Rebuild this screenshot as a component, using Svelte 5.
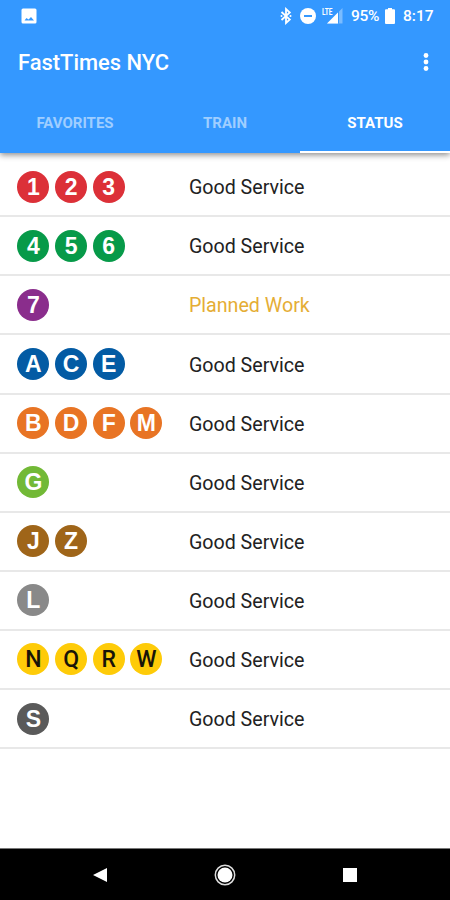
<script>
	const tabs = ['FAVORITES', 'TRAIN', 'STATUS'];
	let active = 'STATUS';

	const lines = [
		{ trains: ['1', '2', '3'], color: '#dc3038', status: 'Good Service' },
		{ trains: ['4', '5', '6'], color: '#079a49', status: 'Good Service' },
		{ trains: ['7'], color: '#8a2d8c', status: 'Planned Work' },
		{ trains: ['A', 'C', 'E'], color: '#035ba4', status: 'Good Service' },
		{ trains: ['B', 'D', 'F', 'M'], color: '#e87424', status: 'Good Service' },
		{ trains: ['G'], color: '#72b936', status: 'Good Service' },
		{ trains: ['J', 'Z'], color: '#9f6519', status: 'Good Service' },
		{ trains: ['L'], color: '#898989', status: 'Good Service' },
		{ trains: ['N', 'Q', 'R', 'W'], color: '#fecb08', dark: true, status: 'Good Service' },
		{ trains: ['S'], color: '#5a5a5a', status: 'Good Service' }
	];
</script>

<div class="app">
	<header>
		<div class="statusbar">
			<svg class="photo" width="16" height="16" viewBox="0 0 16 16">
				<path
					fill="#fff"
					fill-rule="evenodd"
					d="M2 .5h12A1.500 1.500 0 0 1 15.500 2v12a1.500 1.500 0 0 1-1.500 1.500H2A1.500 1.500 0 0 1 .5 14V2A1.500 1.500 0 0 1 2 .5zM3.500 12.500h9.500L10 9 7.500 11.500 5.500 10z"
				/>
			</svg>
			<svg class="bluetooth" width="12" height="18" viewBox="0 0 12 18">
				<path fill="none" stroke="#fff" stroke-width="1.800" d="M1.500 5l8.300 7.500L6 16V2l3.800 3.500L1.500 13" />
				<circle cx="1.500" cy="9" r="1" fill="#fff" />
				<circle cx="10.500" cy="9" r="1" fill="#fff" />
			</svg>
			<svg class="dnd" width="18" height="18" viewBox="0 0 18 18">
				<circle cx="9" cy="9" r="8" fill="#fff" />
				<path stroke="#3498ff" stroke-width="2" d="M5 9h8" />
			</svg>
			<svg class="signal" width="22" height="18" viewBox="0 0 22 18">
				<path fill="#fff" opacity=".35" d="M20.500 1v15.500H5z" />
				<path fill="#fff" d="M16 5.500v11H5z" />
				<path fill="#3498ff" d="M16 1h1v15.500h-1zM0 0h10.500v8.500H0z" />
				<text x="0" y="8" textLength="10.500" lengthAdjust="spacingAndGlyphs">LTE</text>
			</svg>
			<span class="percent">95%</span>
			<svg class="battery" width="10" height="16" viewBox="0 0 10 16">
				<path fill="#fff" d="M3 0h4v1.200h2q1 0 1 1V15q0 1-1 1H1q-1 0-1-1V2.200q0-1 1-1h2z" />
			</svg>
			<span class="clock">8:17</span>
		</div>
		<div class="toolbar">
			<h1>FastTimes NYC</h1>
			<svg width="6" height="20" viewBox="0 0 6 20" fill="#fff">
				<circle cx="3" cy="3.500" r="2.400" />
				<circle cx="3" cy="10" r="2.400" />
				<circle cx="3" cy="16.500" r="2.400" />
			</svg>
		</div>
		<nav class="tabs">
			{#each tabs as tab}
				<button class:active={tab === active} on:click={() => (active = tab)}>{tab}</button>
			{/each}
		</nav>
	</header>

	<main>
		{#each lines as line}
			<div class="row">
				<div class="trains">
					{#each line.trains as train}
						<span class="bullet" class:dark={line.dark} style="background: {line.color}">{train}</span>
					{/each}
				</div>
				<span class="status" class:planned={line.status === 'Planned Work'}>{line.status}</span>
			</div>
		{/each}
	</main>

	<footer>
		<svg width="16" height="16" viewBox="0 0 16 16">
			<path fill="#fff" d="M15 1v14L1 8z" />
		</svg>
		<svg width="22" height="22" viewBox="0 0 22 22">
			<circle cx="11" cy="11" r="9.700" fill="none" stroke="#ddd" stroke-width="1.500" />
			<circle cx="11" cy="11" r="7.500" fill="#fff" />
		</svg>
		<svg width="16" height="16" viewBox="0 0 16 16">
			<path fill="#fff" d="M1 1h14v14H1z" />
		</svg>
	</footer>
</div>

<style>
	:global(body) {
		margin: 0;
	}

	.app {
		display: flex;
		flex-direction: column;
		width: 450px;
		height: 900px;
		overflow: hidden;
		background: #fff;
		font-family: Roboto, sans-serif;
	}

	header {
		flex: none;
		height: 153px;
		background: #3498ff;
		color: #fff;
		box-shadow: 0 2px 6px rgba(0, 0, 0, 0.45);
	}

	.statusbar {
		display: flex;
		align-items: center;
		height: 32px;
		padding: 0 16px 0 21px;
		font-size: 15.500px;
		font-weight: 500;
		line-height: 33px;
	}

	.bluetooth {
		margin-left: auto;
		margin-right: 7px;
	}

	.signal {
		margin-left: 5px;
	}

	.signal text {
		fill: #fff;
		font-size: 9px;
		font-weight: 700;
	}

	.percent {
		width: 29px;
		margin-left: 7px;
		letter-spacing: -0.3px;
	}

	.battery {
		margin-left: 5px;
		margin-right: 8px;
	}

	.clock {
		width: 31px;
		white-space: nowrap;
	}

	.toolbar {
		display: flex;
		align-items: center;
		justify-content: space-between;
		height: 60px;
		padding: 0 21px 0 18px;
	}

	h1 {
		margin: 0;
		padding-top: 2px;
		font-size: 21.900px;
		font-weight: 500;
		line-height: 58px;
	}

	.tabs {
		display: flex;
		height: 61px;
	}

	button {
		flex: 1;
		padding: 2px 0 0;
		border: 0;
		border-bottom: 2px solid transparent;
		background: none;
		color: #9fceff;
		font: 700 15px Roboto, sans-serif;
	}

	button.active {
		border-bottom-color: #fff;
		color: #fff;
	}

	main {
		flex: 1;
		padding-top: 5.200px;
	}

	.row {
		box-sizing: border-box;
		display: grid;
		grid-template-columns: 171.500px 1fr;
		align-items: center;
		height: 59.100px;
		padding-left: 17.400px;
		border-bottom: 2px solid #e8e8e8;
	}

	.trains {
		display: flex;
		gap: 5.700px;
	}

	.bullet {
		width: 32px;
		height: 32px;
		border-radius: 50%;
		color: #fff;
		font: 700 23px/33px 'Liberation Sans', sans-serif;
		text-align: center;
	}

	.bullet.dark {
		color: #181408;
		font: 500 23px/33px Roboto, sans-serif;
	}

	.status {
		padding-top: 2px;
		color: #222;
		font-size: 19.650px;
	}

	.status.planned {
		color: #e5ad35;
	}

	footer {
		display: flex;
		align-items: center;
		justify-content: space-between;
		flex: none;
		box-sizing: border-box;
		height: 52px;
		padding: 0 92px;
		border-top: 1px solid #777;
		background: #000;
	}
</style>
